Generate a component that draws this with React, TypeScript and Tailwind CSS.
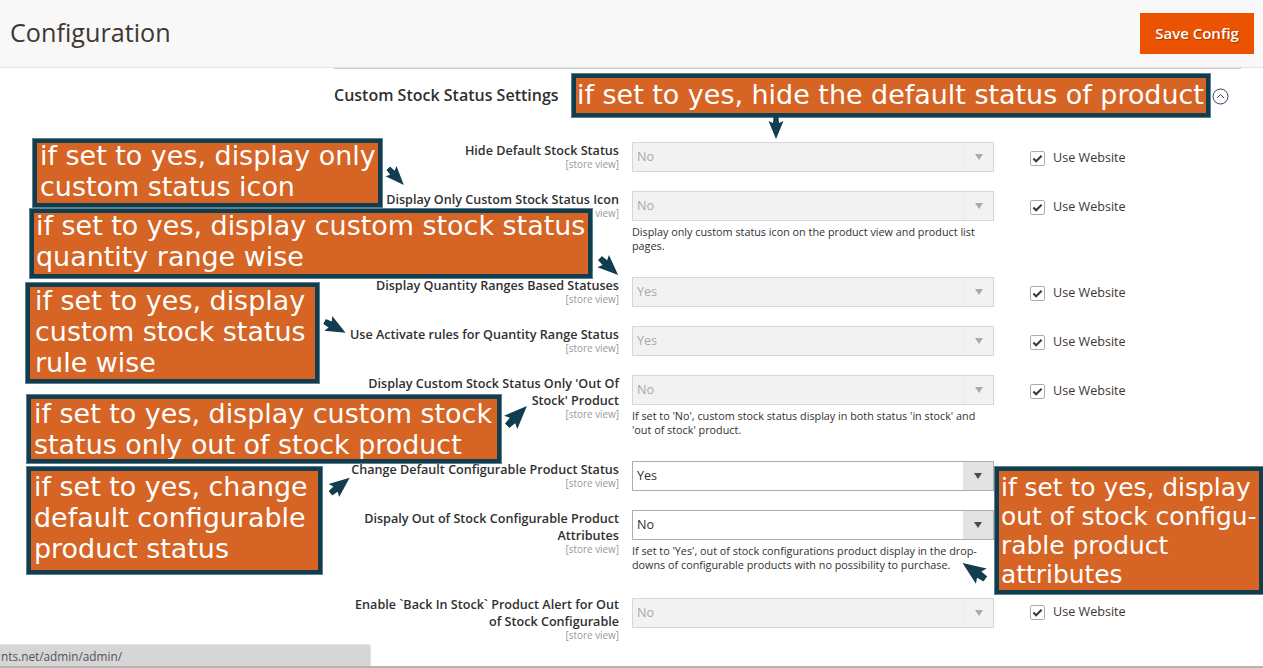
const rows = [
  { label: "Hide Default Stock Status", value: "No", disabled: true },
  { label: "Display Only Custom Stock Status Icon", value: "No", disabled: true, note: "Display only custom status icon on the product view and product list pages." },
  { label: "Display Quantity Ranges Based Statuses", value: "Yes", disabled: true },
  { label: "Use Activate rules for Quantity Range Status", value: "Yes", disabled: true },
  { label: "Display Custom Stock Status Only 'Out Of Stock' Product", value: "No", disabled: true, note: "If set to 'No', custom stock status display in both status 'in stock' and 'out of stock' product." },
  { label: "Change Default Configurable Product Status", value: "Yes", disabled: false },
  { label: "Dispaly Out of Stock Configurable Product Attributes", value: "No", disabled: false, note: "If set to 'Yes', out of stock configurations product display in the drop-downs of configurable products with no possibility to purchase." },
  { label: "Enable `Back In Stock` Product Alert for Out of Stock Configurable", value: "No", disabled: true },
];

const callouts = [
  { lines: ["if set to yes, hide the default status of product"], pos: "left-[572px] top-[74px] w-[638px] h-[43px] pl-[1px] text-[26.95px] leading-[31px]", inner: "mt-[1px]" },
  { lines: ["if set to yes, display only", "custom status icon"], pos: "left-[33px] top-[139px] w-[349px] h-[68px] pl-[3px] text-[26.95px] leading-[31px]", inner: "-mt-[3px]" },
  { lines: ["if set to yes, display custom stock status", "quantity range wise"], pos: "left-[30px] top-[209px] w-[562px] h-[69px] pl-[2px] text-[26.95px] leading-[31px]", inner: "-mt-[3px]" },
  { lines: ["if set to yes, display", "custom stock status", "rule wise"], pos: "left-[26px] top-[283px] w-[293px] h-[100px] pl-[5px] text-[26.95px] leading-[31px]", inner: "-mt-[2px]" },
  { lines: ["if set to yes, display custom stock", "status only out of stock product"], pos: "left-[27px] top-[395px] w-[474px] h-[68px] pl-[3px] text-[26.95px] leading-[31px]", inner: "-mt-[1px]" },
  { lines: ["if set to yes, change", "default configurable", "product status"], pos: "left-[27px] top-[467px] w-[295px] h-[107px] pl-[3px] text-[26.95px] leading-[31px]", inner: "" },
  { lines: ["if set to yes, display", "out of stock configu-", "rable product", "attributes"], pos: "left-[995px] top-[467px] w-[268px] h-[127px] pl-[2px] text-[24.9px] leading-[29px]", inner: "mt-[2px]" },
];

const arrows = [
  "left-[768px] top-[117px] h-[22px] w-[16px] rotate-0",
  "left-[388px] top-[165px] h-[23px] w-[16px] -rotate-[43deg]",
  "left-[600px] top-[254px] h-[25px] w-[18px] -rotate-[47deg]",
  "left-[326px] top-[315px] h-[24px] w-[18px] -rotate-[62deg]",
  "left-[507px] top-[402px] h-[28px] w-[20px] -rotate-[135deg]",
  "left-[331px] top-[473px] h-[25px] w-[18px] -rotate-[129deg]",
  "left-[964px] top-[557px] h-[28px] w-[20px] rotate-[125deg]",
];

function Arrow({ pos }: { pos: string }) {
  return (
    <svg className={`absolute ${pos}`} viewBox="0 0 16 22" preserveAspectRatio="none">
      <path d="M8 22 L0.5 4 L5 6 L5.5 0 L10.5 0 L11 6 L15.5 4 Z" fill="#123d4f" />
    </svg>
  );
}

function Row({ label, value, disabled, note, index }: { label: string; value: string; disabled: boolean; note?: string; index: number }) {
  // rows 5 and 6 have no "Use Website" in view, the callout sits there
  const hasScope = index !== 5 && index !== 6;
  return (
    <div className={`flex items-start ${note ? (index === 6 ? "mb-[26px]" : "mb-[24px]") : "mb-[19px]"}`}>
      <div className={`w-[285px] pl-[8px] text-right ${index === 7 ? "-mt-[2px]" : ""}`}>
        <div className="text-[12.6px] leading-[17px] font-semibold text-[#303030]">{label}</div>
        <div className="text-[9.9px] leading-[11px] text-[#999999]">[store view]</div>
      </div>
      <div className="ml-[13px] w-[362px]">
        <div className={`flex h-[30px] items-center border ${disabled ? "border-[#d6d6d6] bg-[#f2f2f2] text-[#a9a9a9]" : "border-[#adadad] bg-white text-[#303030]"}`}>
          <span className="flex-1 pl-[4px] text-[12.6px]">{value}</span>
          <span className={`flex h-full w-[30px] items-center justify-center ${disabled ? "border-l border-[#e9e9e9]" : "bg-[#e3e3e3]"}`}>
            <span className={`h-0 w-0 border-x-[4px] border-t-[6px] border-x-transparent ${disabled ? "border-t-[#a9a9a9]" : "border-t-[#514943]"}`} />
          </span>
        </div>
        {note && <p className="mt-[4px] pr-[10px] text-[10.8px] leading-[14px] text-[#303030]">{note}</p>}
      </div>
      {/* Use Website checkbox */}
      {hasScope && (
        <div className={`ml-[36px] flex items-center gap-[8px] ${index === 7 ? "mt-[5px]" : "mt-[7px]"}`}>
          <span className="flex h-[15px] w-[15px] items-center justify-center rounded-[2px] border border-[#adadad] bg-white">
            <svg className="h-[11px] w-[11px]" viewBox="0 0 12 12" fill="none" stroke="#41362f" strokeWidth="2.2">
              <path d="M1.5 6 L4.5 9 L10.5 3" />
            </svg>
          </span>
          <span className="text-[12.6px] text-[#41362f]">Use Website</span>
        </div>
      )}
    </div>
  );
}

export default function App() {
  return (
    <div className="relative h-[668px] w-full overflow-hidden bg-white font-['Open_Sans',sans-serif]">
      <header className="flex h-[68px] items-start justify-between border-b border-[#e3e3e3] bg-[#f8f8f8] pl-[10px] pr-[9px]">
        <h1 className="mt-[14px] text-[25.2px] leading-[36px] text-[#41362f]">Configuration</h1>
        <button className="mt-[13px] h-[41px] w-[114px] bg-[#eb5202] text-[15px] font-semibold text-white [text-shadow:1px_1px_1px_rgba(0,0,0,0.3)]">
          Save Config
        </button>
      </header>

      <main className="ml-[334px] w-[907px] border-t border-[#cccccc]">
        <div className="flex h-[73px] items-start pt-[15px]">
          <h2 className="text-[16px] leading-[22px] font-semibold text-[#303030]">Custom Stock Status Settings</h2>
        </div>
        {rows.map((r, i) => (
          <Row key={r.label} label={r.label} value={r.value} disabled={r.disabled} note={r.note} index={i} />
        ))}
      </main>

      {/* collapse icon */}
      <svg className="absolute left-[1212px] top-[88px] h-[17px] w-[17px]" viewBox="0 0 17 17" fill="none" stroke="#2f4258">
        <circle cx="8.5" cy="8.5" r="7.5" />
        <path d="M5 10 L8.5 6.5 L12 10" />
      </svg>

      {/* annotations drawn on top of the screenshot */}
      {callouts.map((c) => (
        <div
          key={c.pos}
          className={`absolute overflow-hidden whitespace-nowrap border-[4px] border-[#123d4f] bg-[#d66425] font-['DejaVu_Sans',sans-serif] text-white outline outline-1 outline-[#5b8291] ${c.pos}`}
        >
          <div className={c.inner}>
            {c.lines.map((line) => (
              <div key={line}>{line}</div>
            ))}
          </div>
        </div>
      ))}
      {arrows.map((a) => (
        <Arrow key={a} pos={a} />
      ))}

      {/* browser status bubble */}
      <div className="absolute bottom-[2px] left-0 h-[22px] w-[371px] rounded-tr-[3px] border-r border-t border-[#e2e2e2] bg-[#d6d6d6] pl-[1px] text-[11.8px] leading-[22px] text-[#555555]">
        nts.net/admin/admin/
      </div>
      <div className="absolute bottom-0 left-0 h-[2px] w-full bg-[#b4b4b4]" />
    </div>
  );
}
